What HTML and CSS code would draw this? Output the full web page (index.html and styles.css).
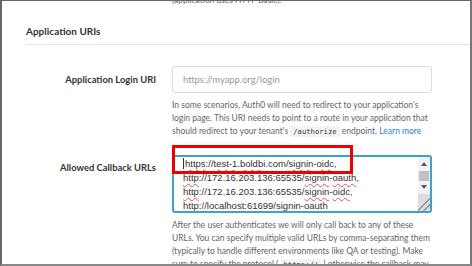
FILE: index.html
```html
<!DOCTYPE html>
<html lang="en">
<head>
    <meta charset="UTF-8">
    <title>Application URIs</title>
    <link rel="stylesheet" href="styles.css">
</head>
<body>
    <div class="frame">
        <p class="prev-help">(application uses HTTP Basic).</p>

        <h2 class="section-title">Application URIs</h2>

        <div class="row">
            <label class="row-label login-label">Application Login URI</label>
            <div class="row-field">
                <div class="input">https://myapp.org/login</div>
                <p class="help">In some scenarios, Auth0 will need to redirect to your application's login page. This URI needs to point to a route in your application that should redirect to your tenant's <code>/authorize</code> endpoint. <a href="#">Learn more</a></p>
            </div>
        </div>

        <div class="row">
            <label class="row-label callback-label">Allowed Callback URLs</label>
            <div class="row-field">
                <div class="textarea-wrap">
                    <div class="textarea">
                        <div class="lines">
                            <div class="line"><span class="caret"></span><span class="typo">https</span>://<span class="typo">test-1</span>.<span class="typo">boldbi</span>.com/<span class="typo">signin</span>-<span class="typo">oidc</span>,</div>
                            <div class="line"><span class="typo">http</span>://172.16.203.136:65535/<span class="typo">signin</span>-<span class="typo">oauth</span>,</div>
                            <div class="line"><span class="typo">http</span>://172.16.203.136:65535/<span class="typo">signin</span>-<span class="typo">oidc</span>,</div>
                            <div class="line"><span class="typo">http</span>://<span class="typo">localhost</span>:61699/<span class="typo">signin</span>-<span class="typo">oauth</span></div>
                        </div>
                        <div class="scrollbar">
                            <span class="arrow up"></span>
                            <span class="thumb"></span>
                            <span class="arrow down"></span>
                            <span class="grip"></span>
                        </div>
                    </div>
                    <div class="highlight"></div>
                </div>
                <p class="help">After the user authenticates we will only call back to any of these URLs. You can specify multiple valid URLs by comma-separating them (typically to handle different environments like QA or testing). Make sure to specify the protocol ( <code>https://</code> ) otherwise the callback may fail in some cases.</p>
            </div>
        </div>
    </div>
</body>
</html>
```

FILE: styles.css
```css
* {
    box-sizing: border-box;
}
body {
    margin: 0;
    font-family: 'Lato', 'Open Sans', sans-serif;
    background-color: #fff;
}
.frame {
    width: 472px;
    height: 266px;
    overflow: hidden;
    border-top: 1px solid #666;
    border-left: 2px solid #666;
    border-right: 2px solid #777;
    border-bottom: 2px solid #888;
    padding-left: 24px;
}
.prev-help {
    margin: -7px 0 0 146px;
    font-size: 8.4px;
    line-height: 13px;
    color: #666;
}
.section-title {
    margin: 17px 0 0 0;
    padding-bottom: 6px;
    border-bottom: 1px solid #e5e5e5;
    font-size: 10px;
    font-weight: 700;
    color: #333;
    line-height: 14px;
}
.row {
    display: grid;
    grid-template-columns: 130px 260px;
    column-gap: 16px;
}
.row:first-of-type {
    margin-top: 21px;
}
.row-label {
    text-align: right;
    font-size: 9.4px;
    font-weight: 700;
    color: #333;
    line-height: 14px;
}
.login-label {
    padding-top: 7px;
}
.callback-label {
    padding-top: 23px;
}
.input {
    height: 27px;
    border: 1px solid #ddd;
    border-radius: 3px;
    padding: 0 10px;
    font-size: 9.4px;
    line-height: 25px;
    color: #999;
}
.help {
    margin: 6px 0 0 0;
    font-size: 8.5px;
    line-height: 13px;
    color: #666;
}
.help code {
    font-family: 'DejaVu Sans Mono', monospace;
    font-size: 7.2px;
    background-color: #f3f3f3;
    padding: 1px 3px;
    border-radius: 2px;
    color: #333;
}
.help a {
    color: #1f86c6;
    text-decoration: none;
}
.textarea-wrap {
    position: relative;
    margin-top: 17px;
}
.textarea {
    display: flex;
    height: 58px;
    border: 2px solid #43a1c4;
    border-radius: 3px;
    overflow: hidden;
}
.lines {
    flex: 1;
    padding: 0 0 0 9px;
    font-family: 'Liberation Sans', Arial, sans-serif;
    font-size: 9.5px;
    line-height: 14px;
    color: #333;
    white-space: nowrap;
}
.typo {
    text-decoration: underline wavy #e05050;
    text-decoration-thickness: 1px;
    text-underline-offset: 2px;
}
.caret {
    display: inline-block;
    width: 1px;
    height: 11px;
    margin-right: 1px;
    vertical-align: -2px;
    background-color: #333;
}
.scrollbar {
    display: flex;
    flex-direction: column;
    align-items: center;
    width: 12px;
    background-color: #f1f1f1;
}
.arrow {
    width: 0;
    height: 0;
    margin: 5px 0;
    border-left: 3px solid transparent;
    border-right: 3px solid transparent;
}
.arrow.up {
    border-bottom: 4px solid #555;
}
.arrow.down {
    border-top: 4px solid #555;
    margin-top: 4px;
}
.thumb {
    width: 10px;
    height: 10px;
    background-color: #c1c1c1;
}
.grip {
    flex: 1;
    width: 12px;
    background: linear-gradient(135deg, transparent 55%, #999 55%, #999 62%, transparent 62%, transparent 75%, #999 75%, #999 82%, transparent 82%), #dcdcdc;
}
.highlight {
    position: absolute;
    left: 0;
    top: -10px;
    width: 181px;
    height: 29px;
    border: 3px solid #ee0000;
}
```
